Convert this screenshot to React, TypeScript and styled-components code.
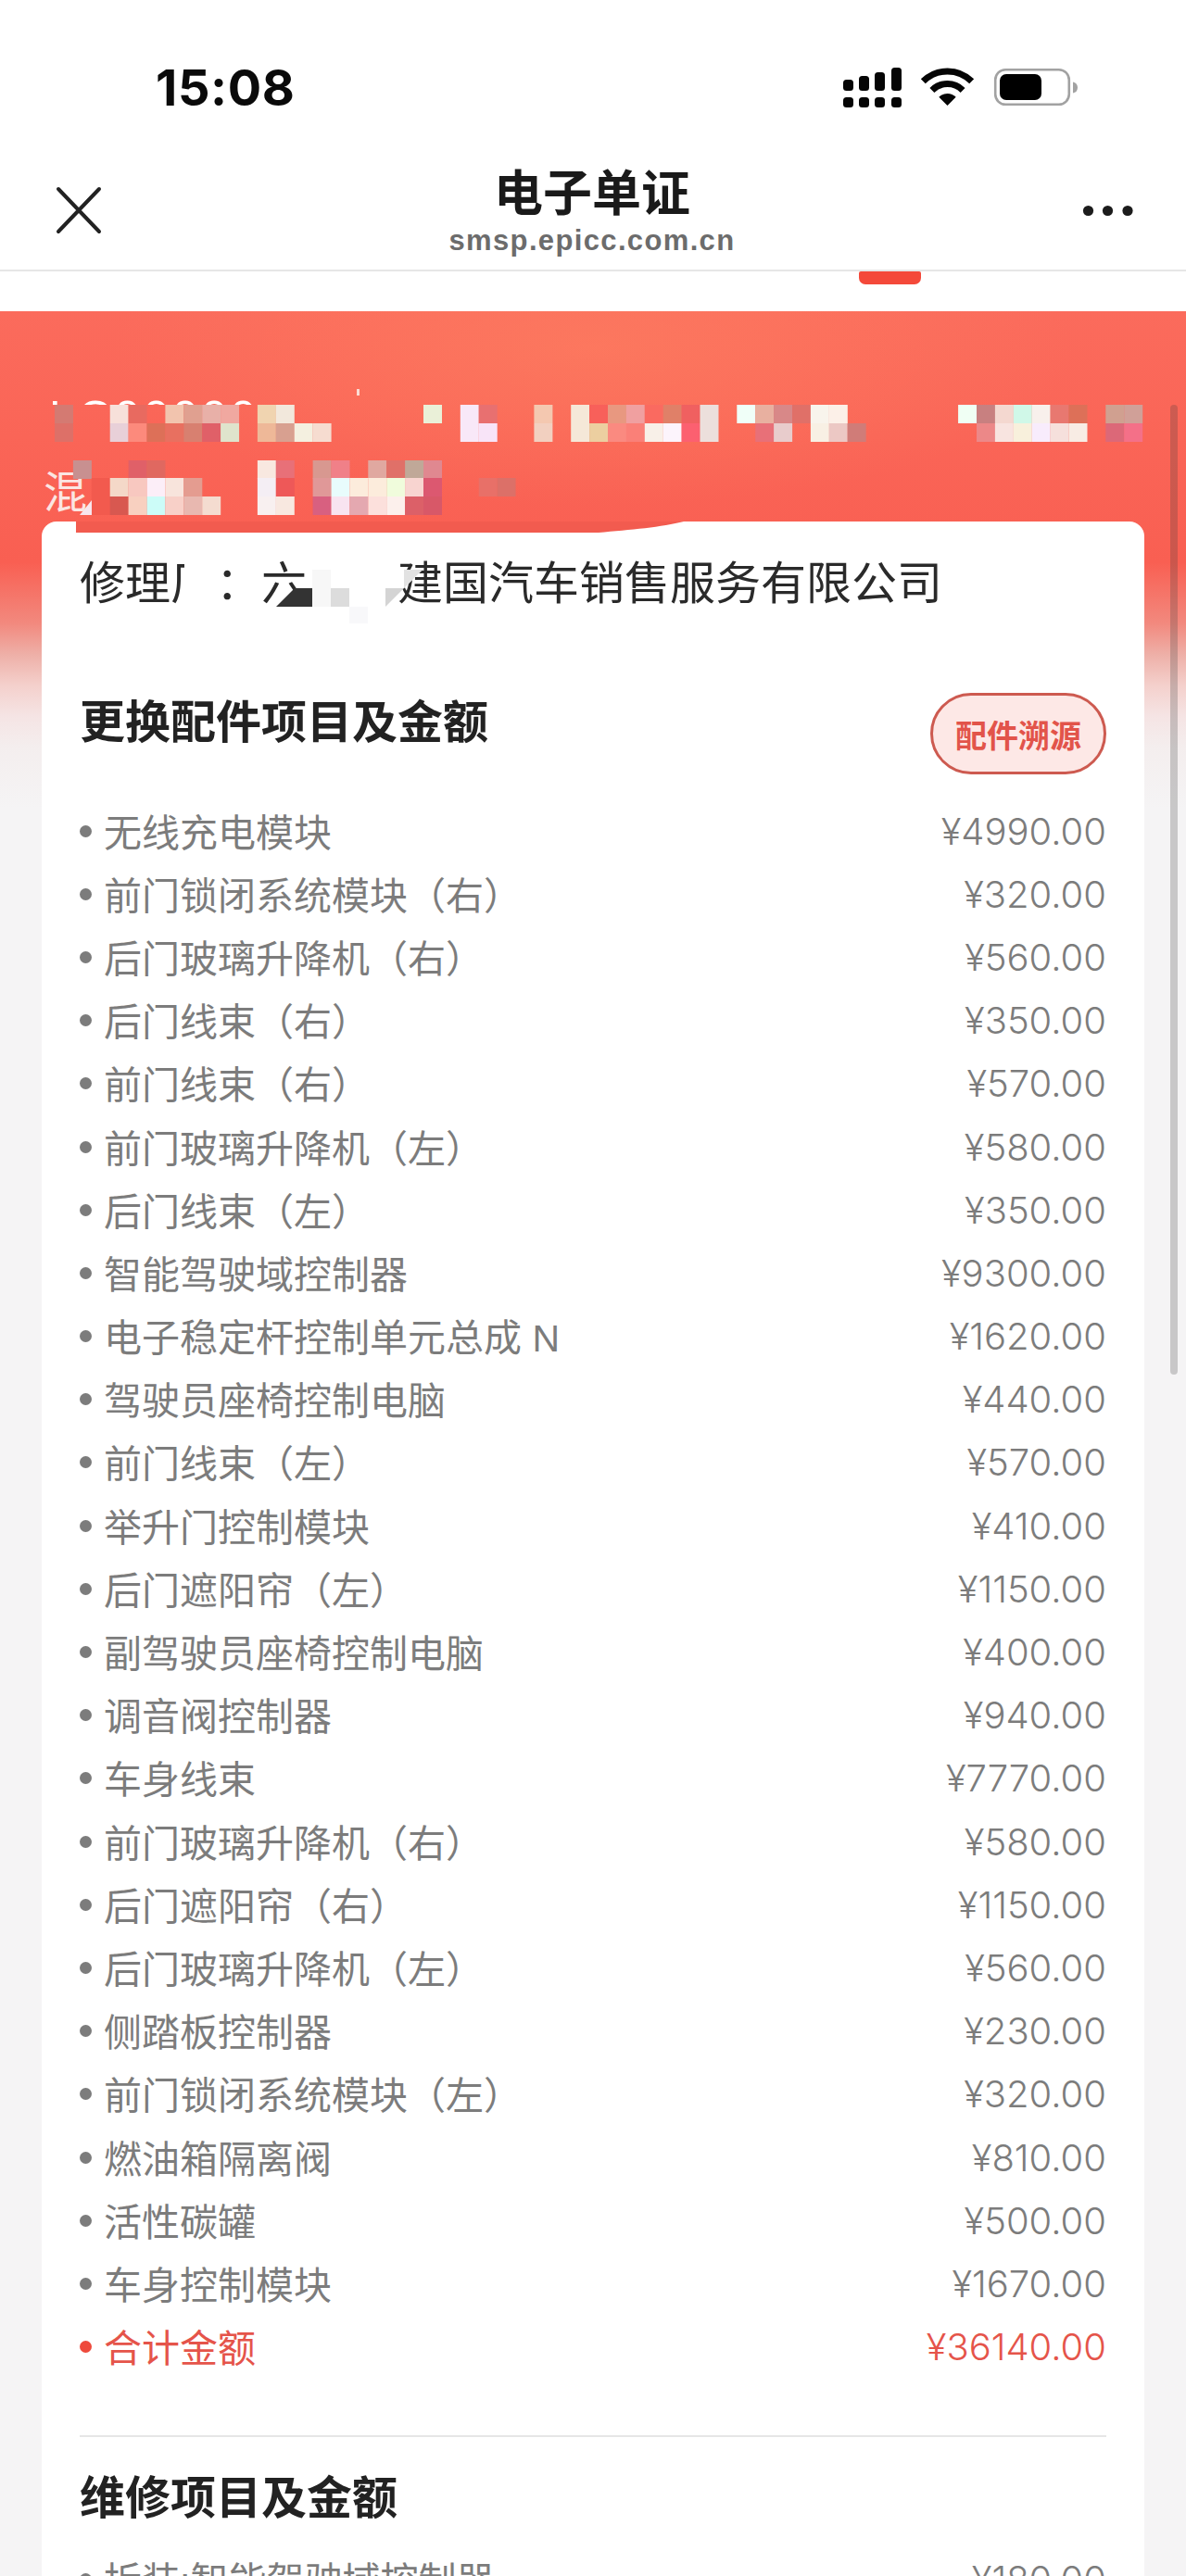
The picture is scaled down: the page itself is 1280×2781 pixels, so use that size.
import React from 'react';
import styled, { createGlobalStyle } from 'styled-components';

const GlobalStyle = createGlobalStyle`
  html, body {
    margin: 0;
    padding: 0;
    background: #f5f4f5;
  }
  * {
    box-sizing: border-box;
  }
`;

const FONT = `"Liberation Sans", "Noto Sans CJK SC", sans-serif`;

const Page = styled.div`
  width: 1280px;
  height: 2781px;
  overflow: hidden;
  position: relative;
  font-family: ${FONT};
  background: #f5f4f5;
`;

const StatusBar = styled.div`
  height: 185px;
  background: #fff;
  display: flex;
  justify-content: space-between;
  align-items: flex-start;
  padding: 64px 116px 0 168px;
`;

const Clock = styled.span`
  font-family: Inter, sans-serif;
  font-size: 54px;
  font-weight: 700;
  line-height: 62px;
  color: #0a0a0a;
  letter-spacing: 0.6px;
`;

const StatusIcons = styled.svg`
  display: block;
  margin-top: 8px;
`;

const NavBar = styled.div`
  height: 108px;
  background: #fff;
  border-bottom: 2px solid #e6e6e6;
  display: flex;
  align-items: flex-start;
  justify-content: space-between;
  padding: 0 56px 0 60px;
`;

const CloseIcon = styled.svg`
  display: block;
  margin-top: 16px;
`;

const MoreIcon = styled.svg`
  display: block;
  margin-top: 36px;
`;

const NavTitle = styled.div`
  display: flex;
  flex-direction: column;
  align-items: center;
  margin-top: -3px;
`;

const TitleText = styled.span`
  font-size: 53px;
  font-weight: 700;
  line-height: 56px;
  color: #1a1a1a;
`;

const TitleHost = styled.span`
  font-size: 31px;
  font-weight: 700;
  line-height: 38px;
  margin-top: 3px;
  color: #6c6c6c;
  letter-spacing: 1.35px;
`;

const TabStrip = styled.div`
  height: 43px;
  background: #fff;
  padding-left: 927px;
`;

const TabMark = styled.div`
  width: 67px;
  height: 14px;
  background: #f4493a;
  border-radius: 2px 2px 7px 7px;
`;

const Main = styled.div`
  position: relative;
  padding-top: 89px;
  min-height: 2445px;
  background: linear-gradient(
    180deg,
    #fb6b5c 0,
    #f95f52 271px,
    #f2897e 337px,
    #eeb0a8 371px,
    #f4d0cc 404px,
    #f5e4e4 437px,
    #f4eeee 471px,
    #f5f4f5 537px
  );
`;

const GlowLayer = styled.div`
  position: absolute;
  inset: 0 0 auto 0;
  height: 227px;
  background: radial-gradient(ellipse 520px 170px at 640px 40px, rgba(255, 140, 100, 0.4), rgba(255, 140, 100, 0));
`;

const ClippedLine = styled.div`
  position: relative;
  height: 12px;
  overflow: hidden;
  margin-left: 53px;
  font-size: 49px;
  line-height: 49px;
  letter-spacing: 4px;
  color: #fff;
`;

const InfoLine = styled.div`
  position: relative;
  height: 126px;
  padding: 70px 0 0 47px;
  font-size: 47px;
  line-height: 50px;
  color: #fbe6e2;
`;

const Mosaic = styled.svg`
  position: absolute;
  left: 0;
  top: 0;
`;

const Card = styled.div`
  position: relative;
  margin: 0 45px 0 45px;
  padding: 33px 41px 0;
  background: #fff;
  border-radius: 16px 16px 0 0;
`;

const CardPatch = styled.svg`
  position: absolute;
  left: 0;
  top: 0;
`;

const CompanyLine = styled.div`
  font-size: 49px;
  line-height: 68px;
  color: #2a2a2a;
`;

const HiddenChars = styled.span`
  display: inline-block;
  width: 2em;
`;

const SectionHead = styled.div<{ $top: number }>`
  display: flex;
  justify-content: space-between;
  align-items: flex-start;
  margin-top: ${(p) => p.$top}px;
`;

const SectionTitle = styled.h2`
  margin: 0;
  font-size: 49px;
  font-weight: 700;
  line-height: 64px;
  color: #222;
`;

const TraceButton = styled.button`
  width: 190px;
  height: 88px;
  padding: 0;
  border: 3px solid #cd5a50;
  border-radius: 44px;
  background: #fde8e6;
  color: #e2544a;
  font-family: ${FONT};
  font-size: 34px;
  font-weight: 700;
`;

const ItemList = styled.ul<{ $top: number }>`
  list-style: none;
  margin: ${(p) => p.$top}px 0 0;
  padding: 0;
`;

const Item = styled.li<{ $total?: boolean }>`
  display: flex;
  align-items: center;
  justify-content: space-between;
  height: 68.2px;
  font-size: 41px;
  color: ${(p) => (p.$total ? '#e5544a' : '#7c7c7c')};
`;

const ItemName = styled.span<{ $total?: boolean }>`
  display: flex;
  align-items: center;
  gap: 13px;
  padding-bottom: 3px;
  white-space: nowrap;

  &:before {
    content: '';
    width: 13px;
    height: 13px;
    margin-top: 3px;
    border-radius: 50%;
    background: ${(p) => (p.$total ? '#ee4a3c' : '#7c7c7c')};
  }
`;

const ItemPrice = styled.span`
  font-family: Inter, sans-serif;
  font-size: 40px;
  font-weight: 300;
`;

const Divider = styled.div`
  height: 2px;
  margin-top: 61px;
  background: #e6e6e6;
`;

const ScrollThumb = styled.div`
  position: absolute;
  left: 1263px;
  top: 437px;
  width: 8px;
  height: 1047px;
  border-radius: 4px;
  background: rgba(60, 60, 60, 0.24);
`;

const parts: [string, string][] = [
  ['无线充电模块', '¥4990.00'],
  ['前门锁闭系统模块（右）', '¥320.00'],
  ['后门玻璃升降机（右）', '¥560.00'],
  ['后门线束（右）', '¥350.00'],
  ['前门线束（右）', '¥570.00'],
  ['前门玻璃升降机（左）', '¥580.00'],
  ['后门线束（左）', '¥350.00'],
  ['智能驾驶域控制器', '¥9300.00'],
  ['电子稳定杆控制单元总成 N', '¥1620.00'],
  ['驾驶员座椅控制电脑', '¥440.00'],
  ['前门线束（左）', '¥570.00'],
  ['举升门控制模块', '¥410.00'],
  ['后门遮阳帘（左）', '¥1150.00'],
  ['副驾驶员座椅控制电脑', '¥400.00'],
  ['调音阀控制器', '¥940.00'],
  ['车身线束', '¥7770.00'],
  ['前门玻璃升降机（右）', '¥580.00'],
  ['后门遮阳帘（右）', '¥1150.00'],
  ['后门玻璃升降机（左）', '¥560.00'],
  ['侧踏板控制器', '¥230.00'],
  ['前门锁闭系统模块（左）', '¥320.00'],
  ['燃油箱隔离阀', '¥810.00'],
  ['活性碳罐', '¥500.00'],
  ['车身控制模块', '¥1670.00'],
];

// pixelated cover over the banner text: [page y, [column, colour]...]
const mosaicRows: [number, [number, string][]][] = [
  [437, [[0, '#d47a72'], [3, '#f7e0da'], [4, '#e86a60'], [6, '#f2c4ae'], [7, '#e0a090'], [8, '#e8b0a8'], [9, '#f0a8a0'], [11, '#f0d4b0'], [12, '#f2e8dc'], [20, '#eaf0d8'], [22, '#f8e8f8'], [23, '#e87070'], [26, '#f4c8b0'], [28, '#f5e8d8'], [29, '#f8605a'], [30, '#e89880'], [31, '#f0a0a0'], [32, '#fa6a60'], [33, '#e08068'], [34, '#f06060'], [35, '#ecdfdc'], [37, '#f0fff8'], [38, '#e8b0a0'], [39, '#d88888'], [40, '#e07068'], [41, '#f8f4ec'], [42, '#fcf0e8'], [49, '#f0fff4'], [50, '#c88080'], [51, '#f4d8d0'], [52, '#d0f8e8'], [53, '#f8f0ec'], [54, '#e87870'], [55, '#dd7058'], [57, '#d0a090'], [58, '#d0a098']]],
  [457, [[0, '#dd7068'], [3, '#e8d0d8'], [4, '#fc8a7c'], [5, '#dd7058'], [6, '#e87060'], [7, '#d88070'], [8, '#e06068'], [9, '#dfe4cc'], [11, '#eeb898'], [12, '#d8a090'], [13, '#f4f0e0'], [14, '#f6dcd0'], [22, '#f8e8f8'], [23, '#f8e4f8'], [26, '#f2d0c0'], [28, '#f5e8d8'], [29, '#eccfa0'], [30, '#fa8a80'], [31, '#fa8078'], [32, '#f8f0e8'], [33, '#fcf4fc'], [34, '#fc6070'], [35, '#ecdfdc'], [38, '#e87078'], [39, '#e8cccc'], [41, '#f8f0e4'], [42, '#ecc8c4'], [43, '#d07c78'], [50, '#ec8888'], [51, '#f8e4e0'], [52, '#f8f0dc'], [53, '#f8ecfc'], [54, '#f6e0dc'], [55, '#f8ece4'], [57, '#dc6878'], [58, '#f47088']]],
  [497, [[1, '#c89090'], [4, '#e06068'], [5, '#e06860'], [11, '#f8e8e0'], [12, '#e87078'], [14, '#d89890'], [15, '#f08088'], [17, '#e0a8a0'], [18, '#e07068'], [19, '#c0a898'], [20, '#e08890']]],
  [516, [[2, '#f25a4e'], [3, '#f4d8c8'], [4, '#f8c8c0'], [5, '#fceef8'], [6, '#f8e4dc'], [7, '#e49c90'], [11, '#f4eef4'], [12, '#ee5858'], [14, '#e09898'], [15, '#e8fcfc'], [16, '#fcecdc'], [17, '#fcecdc'], [18, '#f0fcdc'], [19, '#f8d4d0'], [20, '#dc5870'], [23, '#e87068'], [24, '#dc7068']]],
  [536, [[2, '#f25a4e'], [3, '#d85850'], [4, '#f8d0c0'], [5, '#ccfcf8'], [6, '#f8d0c8'], [7, '#e8b8b0'], [8, '#f4dcd0'], [11, '#f8f0f0'], [12, '#f8e8e0'], [14, '#d86080'], [15, '#f8e4f0'], [16, '#e4a8b0'], [17, '#fce0dc'], [18, '#fcf0ec'], [19, '#dc6068'], [20, '#d85868']]],
];

function StatusGlyphs() {
  return (
    <StatusIcons width="255" height="44" viewBox="0 0 255 44">
      <g fill="#050505">
        <rect x="1" y="14" width="11" height="12" rx="3.5" />
        <rect x="18" y="10" width="11" height="16" rx="3.5" />
        <rect x="35" y="6" width="11" height="20" rx="3.5" />
        <rect x="53" y="1" width="11" height="25" rx="3.5" />
        <rect x="1" y="33" width="11" height="11" rx="3.5" />
        <rect x="18" y="33" width="11" height="11" rx="3.5" />
        <rect x="35" y="33" width="11" height="11" rx="3.5" />
        <rect x="53" y="33" width="11" height="11" rx="3.5" />
      </g>
      <g transform="translate(86 2)" fill="none" stroke="#050505" strokeWidth="7">
        <path d="M1.3 13.8A37 37 0 0 1 53.7 13.8" />
        <path d="M10.9 23.4A23.5 23.5 0 0 1 44.1 23.4" />
        <path d="M27.5 40L18.3 30.8A13 13 0 0 1 36.7 30.8Z" fill="#050505" stroke="none" />
      </g>
      <rect x="165.2" y="3.2" width="79.6" height="37.6" rx="11" fill="none" stroke="#a2a2a2" strokeWidth="2.6" />
      <rect x="170" y="8" width="45" height="28" rx="7" fill="#000" />
      <path d="M249 16.5C252 17 254 19 254 22.5C254 26 252 28 249 28.5Z" fill="#a2a2a2" />
    </StatusIcons>
  );
}

function App() {
  return (
    <Page>
      <GlobalStyle />
      <StatusBar>
        <Clock>15:08</Clock>
        <StatusGlyphs />
      </StatusBar>
      <NavBar>
        <CloseIcon width="50" height="52" viewBox="0 0 50 52">
          <path d="M3 3L47 49M47 3L3 49" stroke="#222" strokeWidth="4" strokeLinecap="round" />
        </CloseIcon>
        <NavTitle>
          <TitleText>电子单证</TitleText>
          <TitleHost>smsp.epicc.com.cn</TitleHost>
        </NavTitle>
        <MoreIcon width="56" height="13" viewBox="0 0 56 13">
          <circle cx="6.5" cy="6.5" r="5.6" fill="#1c1c1c" />
          <circle cx="27.5" cy="6.5" r="5.6" fill="#1c1c1c" />
          <circle cx="49" cy="6.5" r="5.6" fill="#1c1c1c" />
        </MoreIcon>
      </NavBar>
      <TabStrip>
        <TabMark />
      </TabStrip>
      <Main>
        <GlowLayer />
        <ClippedLine>LC00000</ClippedLine>
        <InfoLine>混</InfoLine>
        <Mosaic width="1280" height="240" viewBox="0 336 1280 240">
          {mosaicRows.map(([y, cells]) =>
            cells.map(([col, color]) => (
              <rect key={`${y}-${col}`} x={59 + col * 19.9} y={y} width="20" height="20" fill={color} />
            ))
          )}
          <rect x="385" y="420" width="3" height="7" fill="#fbdcd4" />
          <path d="M86 556L99 540V556Z" fill="#f8e6ee" />
        </Mosaic>
        <Card>
          <CompanyLine>
            修理厂：六<HiddenChars />建国汽车销售服务有限公司
          </CompanyLine>
          <CardPatch width="1189" height="120" viewBox="45 563 1189 120">
            <path d="M82 563H738C715 569 680 572 646 575H82Z" fill="#f25b4f" />
            <rect x="199" y="600" width="36" height="60" fill="#fff" />
            <path d="M298 655L318 635H337V655Z" fill="#333" />
            <rect x="337" y="600" width="80" height="56" fill="#fff" />
            <rect x="337" y="615" width="20" height="40" fill="#f7f7f7" />
            <rect x="357" y="635" width="20" height="20" fill="#dcdcdc" />
            <rect x="377" y="655" width="20" height="18" fill="#f8f8fa" />
            <path d="M416 655V635L436 635L456 615H416Z" fill="#fff" />
            <path d="M416 655V635H436L416 655Z" fill="#d4d4d4" />
            <path d="M436 635L456 615H436Z" fill="#e2e2e2" />
          </CardPatch>
          <SectionHead $top={84}>
            <SectionTitle>更换配件项目及金额</SectionTitle>
            <TraceButton>配件溯源</TraceButton>
          </SectionHead>
          <ItemList $top={27}>
            {parts.map(([name, price], i) => (
              <Item key={i}>
                <ItemName>{name}</ItemName>
                <ItemPrice>{price}</ItemPrice>
              </Item>
            ))}
            <Item $total>
              <ItemName $total>合计金额</ItemName>
              <ItemPrice>¥36140.00</ItemPrice>
            </Item>
          </ItemList>
          <Divider />
          <SectionHead $top={34}>
            <SectionTitle>维修项目及金额</SectionTitle>
          </SectionHead>
          <ItemList $top={22}>
            <Item>
              <ItemName>拆装:智能驾驶域控制器</ItemName>
              <ItemPrice>¥180.00</ItemPrice>
            </Item>
          </ItemList>
        </Card>
      </Main>
      <ScrollThumb />
    </Page>
  );
}

export default App;
